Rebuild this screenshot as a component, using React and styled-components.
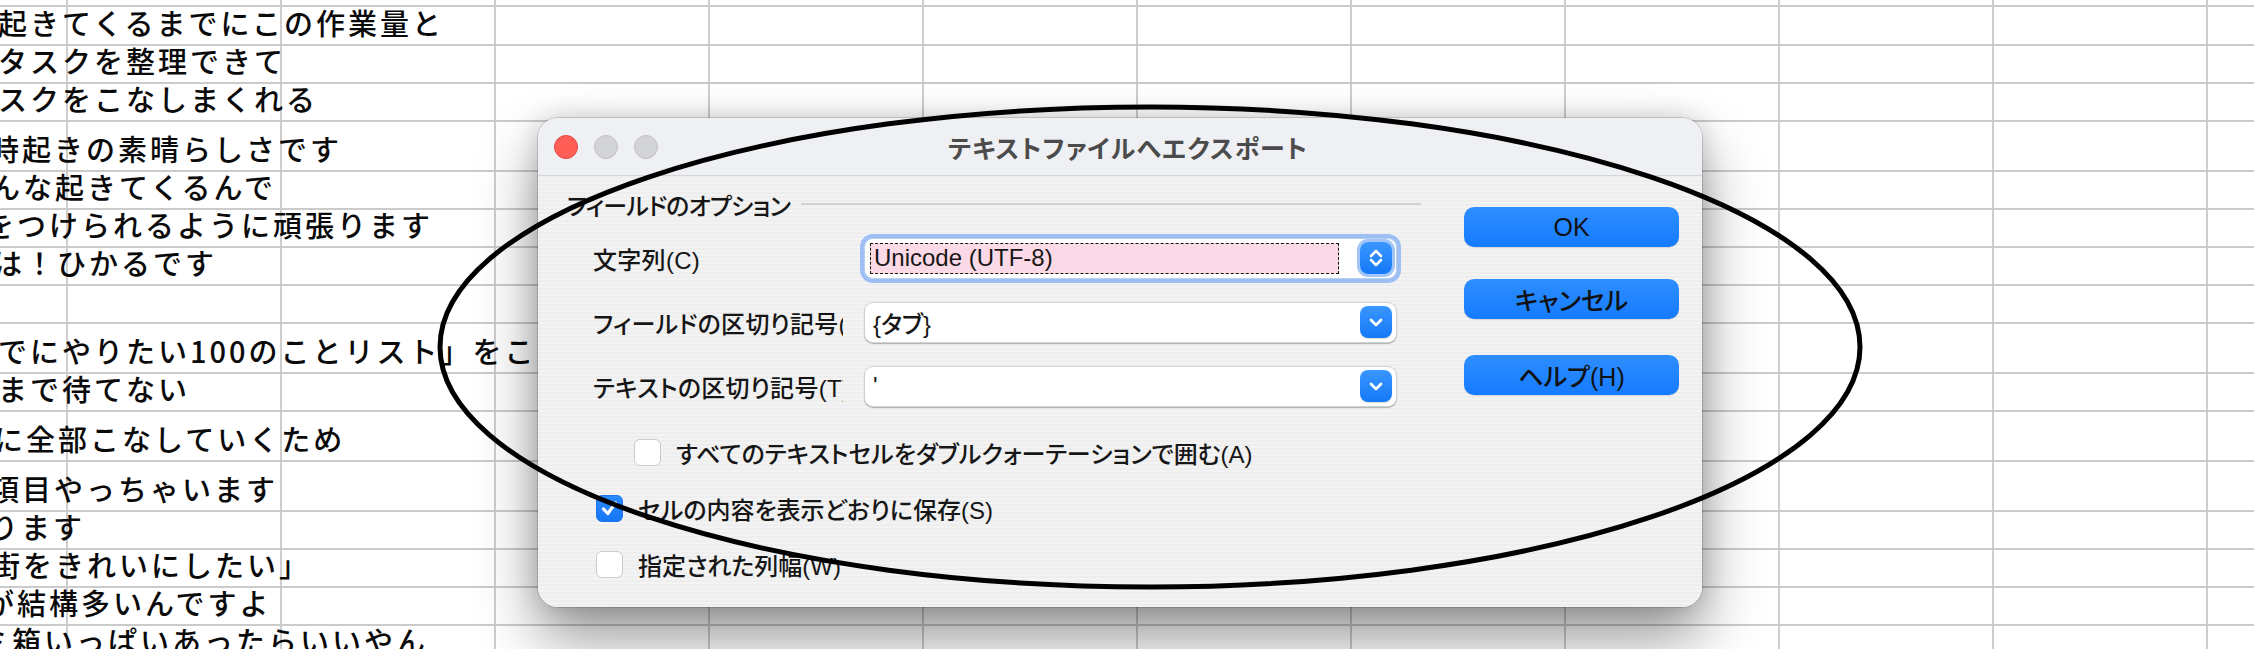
import React from 'react';
import styled, { createGlobalStyle } from 'styled-components';

const Global = createGlobalStyle`
  html, body { margin: 0; padding: 0; background: #fff; }
  body { width: 2254px; height: 649px; overflow: hidden; }
  * { box-sizing: border-box; }
`;

const Screen = styled.div`
  position: relative;
  width: 2254px;
  height: 649px;
  overflow: hidden;
  background: #fff;
  font-family: "Noto Sans CJK JP", "Noto Sans", sans-serif;
`;

const Sheet = styled.div`
  margin-top: -31px;
  display: flex;
  flex-direction: column;
  background-image: linear-gradient(to right, #cdcdcd 0, #cdcdcd 2px, transparent 2px);
  background-size: 214px 100%;
  background-position: 66px 0;
  background-repeat: repeat-x;
`;

const SheetRow = styled.div`
  flex: none;
  height: ${(p) => p.$h}px;
  border-bottom: 2px solid #cbcbcb;
  display: flex;
  align-items: flex-end;
  padding-bottom: 7px;
  overflow: hidden;
  white-space: nowrap;
`;

const CellText = styled.span`
  margin-left: ${(p) => p.$shift}px;
  font-family: "Noto Sans CJK JP", sans-serif;
  font-weight: 500;
  font-size: 29px;
  line-height: 29px;
  letter-spacing: 3px;
  color: #0a0a0a;
`;

const Dialog = styled.div`
  position: absolute;
  left: 538px;
  top: 118px;
  width: 1164px;
  height: 489px;
  border-radius: 20px;
  overflow: hidden;
  display: flex;
  flex-direction: column;
  box-shadow: 0 0 0 1px rgba(0, 0, 0, 0.14), 0 0 26px rgba(0, 0, 0, 0.16),
    0 30px 60px rgba(0, 0, 0, 0.42);
  font-family: "Liberation Sans", "Noto Sans CJK JP", sans-serif;
  font-feature-settings: "palt";
  font-weight: 500;
  font-size: 24px;
  color: #161616;
`;

const TitleBar = styled.div`
  flex: none;
  height: 58px;
  background: #eef0f3;
  border-bottom: 1px solid #d4d5d7;
  display: grid;
  grid-template-columns: 1fr auto 1fr;
  align-items: center;
  padding-left: 16px;
`;

const Lights = styled.div`
  display: flex;
  gap: 16px;
`;

const Light = styled.span`
  width: 24px;
  height: 24px;
  border-radius: 50%;
  background: ${(p) => (p.$red ? '#ff5f57' : '#d3d4d6')};
  border: 1px solid ${(p) => (p.$red ? '#e2463f' : '#c0c1c3')};
`;

const Title = styled.div`
  font-family: "Noto Sans CJK JP", sans-serif;
  font-weight: 700;
  font-size: 25px;
  color: #4b4b4b;
  letter-spacing: 1.2px;
`;

const Body = styled.div`
  flex: 1;
  display: flex;
  gap: 43px;
  padding: 0 23px 0 29px;
  background: repeating-linear-gradient(
    180deg,
    #eeeeee 0px,
    #eeeeee 2px,
    #f3f3f3 2px,
    #f3f3f3 4px
  );
`;

const Options = styled.div`
  width: 854px;
  display: flex;
  flex-direction: column;
`;

const GroupHeader = styled.div`
  margin-top: 13px;
  height: 30px;
  display: flex;
  align-items: center;
  gap: 11px;
  white-space: nowrap;
  letter-spacing: -0.8px;
`;

const GroupRule = styled.div`
  flex: 1;
  height: 2px;
  background: #d2d2d2;
`;

const FieldList = styled.div`
  margin-top: 14px;
  display: flex;
  flex-direction: column;
  gap: 14px;
`;

const FieldRow = styled.div`
  height: 50px;
  display: flex;
  align-items: center;
  padding-left: 26px;
`;

const FieldLabel = styled.div`
  width: 250px;
  margin-right: 21px;
  overflow: hidden;
  white-space: nowrap;
  letter-spacing: 0.3px;
`;

const Popup = styled.div`
  width: 533px;
  height: 41px;
  border-radius: 9px;
  background: #fff;
  border: 1px solid ${(p) => (p.$focused ? '#b9cff0' : '#d2d2d2')};
  box-shadow: ${(p) =>
    p.$focused
      ? '0 0 0 4px rgba(125, 172, 245, 0.72)'
      : '0 1px 1px rgba(0, 0, 0, 0.28)'};
  display: flex;
  align-items: center;
  padding: 0 4px 0 5px;
`;

const Selection = styled.div`
  flex: 1;
  height: 31px;
  margin-right: 21px;
  background: #fcd9e6;
  border: 1.5px dashed #111;
  display: flex;
  align-items: center;
  padding-left: 3px;
  font-weight: 400;
`;

const Value = styled.div`
  flex: 1;
  padding-left: 3px;
  white-space: nowrap;
`;

const ArrowButton = styled.div`
  flex: none;
  width: 32px;
  height: 32px;
  border-radius: 8px;
  background: linear-gradient(180deg, #3a97ff 0%, #1479f7 100%);
  box-shadow: ${(p) =>
    p.$focused ? '0 0 0 3px rgba(125, 172, 245, 0.7)' : '0 1px 1px rgba(0,0,0,0.15)'};
  display: flex;
  align-items: center;
  justify-content: center;
`;

const CheckList = styled.div`
  margin-top: 21px;
  display: flex;
  flex-direction: column;
  gap: 16px;
`;

const CheckRow = styled.div`
  height: 40px;
  display: flex;
  align-items: center;
  gap: 15px;
  padding-left: ${(p) => p.$indent}px;
  white-space: nowrap;
`;

const Box = styled.div`
  flex: none;
  width: 27px;
  height: 27px;
  border-radius: 6px;
  background: ${(p) => (p.$checked ? 'linear-gradient(180deg, #2a8bff, #1577f5)' : '#fff')};
  border: 1px solid ${(p) => (p.$checked ? '#1a74ea' : '#cbcbcb')};
  display: flex;
  align-items: center;
  justify-content: center;
`;

const Buttons = styled.div`
  width: 215px;
  padding-top: 31px;
  display: flex;
  flex-direction: column;
`;

const PushButton = styled.div`
  height: 40px;
  margin-top: ${(p) => p.$gap}px;
  border-radius: 10px;
  background: linear-gradient(180deg, #2e8eff 0%, #157bff 100%);
  box-shadow: 0 1px 1px rgba(0, 0, 0, 0.12);
  color: #111;
  font-size: 25px;
  display: flex;
  align-items: center;
  justify-content: center;
`;

const Annotation = styled.svg`
  position: absolute;
  left: 0;
  top: 0;
  pointer-events: none;
`;

const rows = [
  { h: 38, t: '時に起きると家族がまだ寝ている間に', s: -12 },
  { h: 39, t: '起きてくるまでにこの作業量と', s: -2 },
  { h: 38, t: 'タスクを整理できて', s: -2 },
  { h: 38, t: 'スクをこなしまくれる', s: -2 },
  { h: 50, t: '時起きの素晴らしさです', s: -10 },
  { h: 38, t: 'んな起きてくるんで', s: -9 },
  { h: 38, t: 'をつけられるように頑張ります', s: -15 },
  { h: 38, t: 'は！ひかるです', s: -7 },
  { h: 38, t: '', s: 0 },
  { h: 50, t: 'でにやりたい100のことリスト」をこ', s: -2 },
  { h: 38, t: 'まで待てない', s: -2 },
  { h: 50, t: 'に全部こなしていくため', s: -6 },
  { h: 50, t: '項目やっちゃいます', s: -10 },
  { h: 38, t: 'ります', s: -11 },
  { h: 38, t: '街をきれいにしたい」', s: -9 },
  { h: 38, t: 'が結構多いんですよ', s: -15 },
  { h: 38, t: 'ミ箱いっぱいあったらいいやん', s: -20 },
];

const UpDown = () => (
  <svg width="20" height="24" viewBox="0 0 20 24">
    <path d="M5 10 L10 5 L15 10" fill="none" stroke="#fff" strokeWidth="2.6" strokeLinecap="round" strokeLinejoin="round" />
    <path d="M5 14 L10 19 L15 14" fill="none" stroke="#fff" strokeWidth="2.6" strokeLinecap="round" strokeLinejoin="round" />
  </svg>
);

const Down = () => (
  <svg width="20" height="20" viewBox="0 0 20 20">
    <path d="M5 8 L10 13 L15 8" fill="none" stroke="#fff" strokeWidth="2.8" strokeLinecap="round" strokeLinejoin="round" />
  </svg>
);

const Check = () => (
  <svg width="21" height="21" viewBox="0 0 21 21">
    <path d="M4.5 11 L8.8 15.5 L16.5 5" fill="none" stroke="#fff" strokeWidth="3.2" strokeLinecap="round" strokeLinejoin="round" />
  </svg>
);

export default function App() {
  return (
    <Screen>
      <Global />
      <Sheet>
        {rows.map((r, i) => (
          <SheetRow key={i} $h={r.h}>
            <CellText $shift={r.s}>{r.t}</CellText>
          </SheetRow>
        ))}
      </Sheet>

      <Dialog>
        <TitleBar>
          <Lights>
            <Light $red />
            <Light />
            <Light />
          </Lights>
          <Title>テキストファイルへエクスポート</Title>
          <span />
        </TitleBar>
        <Body>
          <Options>
            <GroupHeader>
              <span>フィールドのオプション</span>
              <GroupRule />
            </GroupHeader>
            <FieldList>
              <FieldRow>
                <FieldLabel>文字列(C)</FieldLabel>
                <Popup $focused>
                  <Selection>Unicode (UTF-8)</Selection>
                  <ArrowButton $focused>
                    <UpDown />
                  </ArrowButton>
                </Popup>
              </FieldRow>
              <FieldRow>
                <FieldLabel>フィールドの区切り記号(F)</FieldLabel>
                <Popup>
                  <Value>{'{タブ}'}</Value>
                  <ArrowButton>
                    <Down />
                  </ArrowButton>
                </Popup>
              </FieldRow>
              <FieldRow>
                <FieldLabel>テキストの区切り記号(T)</FieldLabel>
                <Popup>
                  <Value>'</Value>
                  <ArrowButton>
                    <Down />
                  </ArrowButton>
                </Popup>
              </FieldRow>
            </FieldList>
            <CheckList>
              <CheckRow $indent={67}>
                <Box />
                <span>すべてのテキストセルをダブルクォーテーションで囲む(A)</span>
              </CheckRow>
              <CheckRow $indent={29}>
                <Box $checked>
                  <Check />
                </Box>
                <span>セルの内容を表示どおりに保存(S)</span>
              </CheckRow>
              <CheckRow $indent={29}>
                <Box />
                <span>指定された列幅(W)</span>
              </CheckRow>
            </CheckList>
          </Options>
          <Buttons>
            <PushButton $gap={0}>OK</PushButton>
            <PushButton $gap={32}>キャンセル</PushButton>
            <PushButton $gap={36}>ヘルプ(H)</PushButton>
          </Buttons>
        </Body>
      </Dialog>

      <Annotation width="2254" height="649" viewBox="0 0 2254 649">
        <ellipse cx="1150" cy="347" rx="710" ry="240" fill="none" stroke="#000" strokeWidth="5" />
      </Annotation>
    </Screen>
  );
}
